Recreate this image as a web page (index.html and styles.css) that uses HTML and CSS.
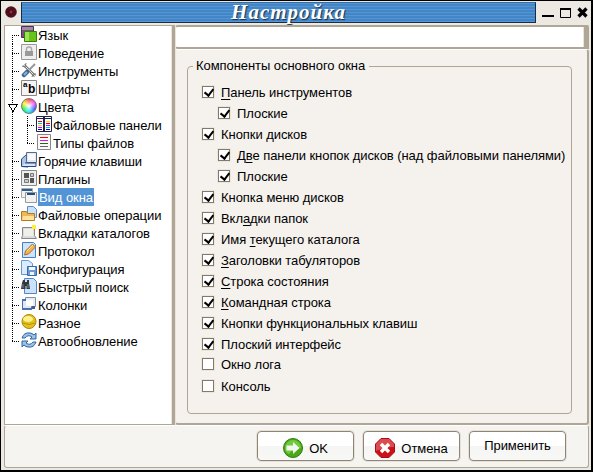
FILE: index.html
```html
<!DOCTYPE html>
<html lang="ru">
<head>
<meta charset="utf-8">
<title>Настройка</title>
<link rel="stylesheet" href="styles.css">
</head>
<body>
<div class="window">
<header class="titlebar">
<svg class="app" viewBox="0 0 12 12"><circle cx="6" cy="6" r="5.8" fill="#5a1020"/><path d="M2 3l8 6M3 10l6-8M1 6h10M6 1v10" stroke="#31101c"/><circle cx="6" cy="6" r="1.4" fill="#a52a32"/></svg>
<h1 class="caption">Настройка</h1>
<svg class="controls" viewBox="0 0 50 16"><path d="M3 12h12M21 5h11" stroke="#000" stroke-width="2"/><path d="M21.500 4.500v9h10v-9z" fill="none" stroke="#000"/><path d="M39.500 4.500l8 8M47.500 4.500l-8 8" stroke="#000" stroke-width="3.200"/></svg>
</header>
<div class="main">
<nav class="tree">
<div class="row first"><svg viewBox="0 0 16 16"><path d="M.5.5h12v11H.5z" fill="#79517f" stroke="#4a2c54"/><path d="M1 1h11v3H1z" fill="#a887ad"/><path d="M3.500 5.500h12v10h-12z" fill="#66c51a" stroke="#378000"/><path d="M4 6h4v9H4z" fill="#9be255"/></svg><span>Язык</span></div>
<div class="row"><svg viewBox="0 0 16 16"><path d="M.5.500h15v15H.5z" fill="#eee" stroke="#999"/><path d="M5.500 7V5q0-2 2.500-2t2.500 2v2" fill="none" stroke="#aaa" stroke-width="1.500"/><path d="M4 7h8v5H4z" fill="#999"/></svg><span>Поведение</span></div>
<div class="row"><svg viewBox="0 0 16 16"><path d="M3 3l11 11" stroke="#777" stroke-width="2.600"/><path d="M3 3l11 11" stroke="#e5e5e5"/><path d="M14 2L8 8" stroke="#999" stroke-width="2"/><path d="M6 10l-3 3" stroke="#3d6793" stroke-width="4.500" stroke-linecap="round"/><path d="M6 10l-3 3" stroke="#8eb1d4" stroke-width="2"/><path d="M1 4l3 1 1-4M11 15l1-3 3 0" fill="none" stroke="#777"/></svg><span>Инструменты</span></div>
<div class="row"><svg viewBox="0 0 16 16"><path d="M.5.5h15v15H.5z" fill="#f4f4f4" stroke="#888"/><text x="2" y="7" font-size="8" class="glyph">a</text><text x="7" y="13" font-size="12" class="glyph">b</text></svg><span>Шрифты</span></div>
<div class="row open"><i class="wheel"></i><span>Цвета</span></div>
<div class="row sub"><svg viewBox="0 0 16 16"><path d="M.5.500h15v15H.5z" fill="#fff" stroke="#202050"/><path d="M0 2.500h16" stroke="#202050"/><path d="M8 1v15" stroke="#202050" stroke-width="2"/><path d="M2 5.500h4M10 7.500h4" stroke="red"/><path d="M2 7.500h4M10 11.500h4" stroke="#0bd"/><path d="M2 9.500h4M10 5.500h4" stroke="#ed0"/><path d="M2 11.500h4M10 9.500h4" stroke="#d0d"/><path d="M2 13.500h4M10 13.500h4" stroke="#00c"/></svg><span>Файловые панели</span></div>
<div class="row sub last"><svg viewBox="0 0 16 16"><path d="M1.500.5h13v15h-13z" fill="#f8f8f8" stroke="#888"/><path d="M4 3.500h8" stroke="red"/><path d="M4 6.500h8" stroke="#f0f"/><path d="M4 9.500h8" stroke="green"/><path d="M4 12.500h8" stroke="#666"/></svg><span>Типы файлов</span></div>
<div class="row"><svg viewBox="0 0 16 16"><path d="M.5 14.500V7L5 3h2v12z" fill="#acc7e5" stroke="#244b80"/><path d="M5.500.5h10v10h-10z" fill="#e6e8eb" stroke="#516d94"/><path d="M7 2h7v6H7z" fill="#fafafa"/><path d="M1 14.500h14V11H4" fill="#d7e3f2" stroke="#244b80"/></svg><span>Горячие клавиши</span></div>
<div class="row"><svg viewBox="0 0 16 16"><path d="M.5.5h15v15H.5z" fill="#eee" stroke="#888"/><path d="M3 3h5v5H3zM9 8h4v5H9z" fill="#555"/><path d="M9.500 3.500h3v3h-3zM3.500 9.500h4v3h-4z" fill="#ccc" stroke="#777"/></svg><span>Плагины</span></div>
<div class="row selected"><svg viewBox="0 0 16 16"><path d="M.5.5h11v9H.5z" fill="#f2f2f2" stroke="#aaa"/><path d="M1 2h10" stroke="#2b5c9b" stroke-width="2"/><path d="M4.500 4.500h11v10h-11z" fill="#f2f2f2" stroke="#999"/><path d="M6 6h8" stroke="#244d85" stroke-width="2"/></svg><span>Вид окна</span></div>
<div class="row"><svg viewBox="0 0 16 16"><path d="M6.500.5h6l3 3v8h-9z" fill="#c7e2fc" stroke="#568dca"/><path d="M.5 14.500v-9h5l1 2h7v7z" fill="#efb655" stroke="#b67a21"/><path d="M1 14l1-4h11v4z" fill="#ffe39b"/></svg><span>Файловые операции</span></div>
<div class="row"><svg viewBox="0 0 16 16"><path d="M1.500 3.500h12v8l2 3H.5l1-3z" fill="#ddd" stroke="#888"/><path d="M3 5h9v7H3z" fill="#f0f0ea"/><path d="M11 1h4v4h-4z" fill="#fff12e"/></svg><span>Вкладки каталогов</span></div>
<div class="row"><svg viewBox="0 0 16 16"><path d="M1.500.5h11l2 2v13h-13z" fill="#cfe4f9" stroke="#3f82c7"/><path d="M3.500 13l1-4 7-7 3 3-7 7z" fill="#f4b454" stroke="#ad6e29"/><path d="M6 9l6-6" stroke="#ffe19b"/></svg><span>Протокол</span></div>
<div class="row"><svg viewBox="0 0 16 16"><path d="M.5.5h7l4 3v11H.5z" fill="#d9ebfc" stroke="#6797cf"/><path d="M6.500 6.500h9v9h-9z" fill="#6e9bd2" stroke="#356db1"/><path d="M8 7h6v3H8zM9 12h4v3H9z" fill="#f2f6fb"/></svg><span>Конфигурация</span></div>
<div class="row"><svg viewBox="0 0 16 16"><path d="M3.500.5h9l3 3v12h-12z" fill="#cae2fb" stroke="#4e88c8"/><path d="M2 2h2v2h2V2h2v3l1 6H5.500V8H4.500v3H0l1-6z" fill="#33383c"/><path d="M2 6v4M7 6v4" stroke="#7d8790"/></svg><span>Быстрый поиск</span></div>
<div class="row"><svg viewBox="0 0 16 16"><path d="M4.500 1.500h10v9h-10z" fill="#e9edf3" stroke="#8190aa"/><path d="M1 3h4v8h6v3H1z" fill="#4a70b0"/><path d="M2 5h8v7H2z" fill="#e1e8f3"/><path d="M5 4h7v6H5z" fill="#fff"/><path d="M11 10h3v3h-3z" fill="#405d94"/></svg><span>Колонки</span></div>
<div class="row"><svg viewBox="0 0 16 16"><circle cx="8" cy="7.500" r="7" fill="#e3c21e" stroke="#a78608"/><ellipse cx="7" cy="5" rx="5" ry="3" fill="#fff18a"/><path d="M2 9q6 3 12 0" fill="none" stroke="#b39208"/></svg><span>Разное</span></div>
<div class="row last"><svg viewBox="0 0 16 16"><path d="M1 6q2-6 8-5 2 0 4 2l2-2v6H9l2-2Q7 2 4 6zM15 10q-2 6-8 5-2 0-4-2l-2 2V9h6l-2 2q4 3 7-1z" fill="#9bc1e7" stroke="#2e669f"/></svg><span>Автообновление</span></div>
</nav>
<section class="side">
<div class="heading"></div>
<div class="panel">
<fieldset class="group">
<legend>Компоненты основного окна</legend>
<label class="option"><i class="box on"></i><span><u>П</u>анель инструментов</span></label>
<label class="option child"><i class="box on"></i><span>Плоские</span></label>
<label class="option"><i class="box on"></i><span>Кнопки дисков</span></label>
<label class="option child"><i class="box on"></i><span>Д<u>в</u>е панели кнопок дисков (над файловыми панелями)</span></label>
<label class="option child"><i class="box on"></i><span>Плоские</span></label>
<label class="option"><i class="box on"></i><span>Кнопка меню дисков</span></label>
<label class="option"><i class="box on"></i><span>Вкл<u>а</u>дки папок</span></label>
<label class="option"><i class="box on"></i><span>Имя <u>т</u>екущего каталога</span></label>
<label class="option"><i class="box on"></i><span><u>З</u>аголовки табуляторов</span></label>
<label class="option"><i class="box on"></i><span><u>С</u>трока состояния</span></label>
<label class="option"><i class="box on"></i><span><u>К</u>омандная строка</span></label>
<label class="option"><i class="box on"></i><span>Кнопки функциональных клавиш</span></label>
<label class="option"><i class="box on"></i><span>Плоский интерфейс</span></label>
<label class="option log"><i class="box"></i><span>Окно лога</span></label>
<label class="option"><i class="box"></i><span>Консоль</span></label>
</fieldset>
</div>
</section>
</div>
<footer class="footer">
<button class="button ok"><svg viewBox="0 0 20 20"><circle cx="10" cy="10" r="9.500" fill="#4aa91b" stroke="#2e7d0b"/><path d="M2 10a8 8 0 0 1 16 0q-8 0-12 6Q2 14 2 10z" fill="#72c93f"/><path d="M3.500 7.500H10V4l6.500 6L10 16v-3.500H3.500z" fill="#f2f7ec"/></svg><span>OK</span></button>
<button class="button cancel"><svg viewBox="0 0 20 20"><path d="M6 .5h8L19.500 6v8L14 19.500H6L.5 14V6z" fill="#cc1118" stroke="#a01218"/><path d="M6 1h8l5 5v3Q9 9 1 13V6z" fill="#db4c50"/><path d="M6 6l8 8M14 6l-8 8" stroke="#fff" stroke-width="3.500"/></svg><span>Отмена</span></button>
<button class="button apply"><span>Применить</span></button>
</footer>
</div>
</body>
</html>
```
FILE: styles.css
```css
* { box-sizing: border-box; }
body { margin: 0; font: 13px/18px "Liberation Sans", sans-serif; letter-spacing: -.06px; color: #000; }
.window { width: 593px; height: 472px; border: 1px solid #000; border-right-width: 2px; border-bottom-width: 2px; background: #ece9e2; padding: 1px 2px 2px 3px; display: flex; flex-direction: column; }
.titlebar { height: 23px; display: flex; flex: none; }
.app { width: 12px; height: 12px; margin: 4px 4px 0 1px; flex: none; }
.caption { width: 515px; height: 21px; margin: 0; border: 1px solid #1b2c47; border-top-color: #386ba2; background: repeating-linear-gradient(#5296d7 0 1px, #4485c6 1px 3px); color: #fff; font: bold italic 21px/19px "Liberation Serif", serif; letter-spacing: 1px; text-align: center; padding-left: 20px; text-shadow: 1px 1px 1px #182c48; }
.controls { width: 50px; height: 16px; margin: 2px 0 0 3px; }
.main { display: flex; height: 400px; flex: none; }
.tree { width: 171px; flex: none; background: #fff; border: 1px solid #b0a695; border-right: 3px solid #b0a695; padding: 0; box-shadow: inset -1px 0 #e9e5dd; }
.row { height: 18px; display: flex; padding-left: 16px; position: relative; }
.row svg, .wheel { width: 16px; height: 16px; flex: none; }
.row span { margin-left: 1px; line-height: 18px; height: 18px; white-space: nowrap; padding-top: 1px; }
.row::before { content: ""; position: absolute; left: 7px; top: 0; width: 1px; height: 18px; background: repeating-linear-gradient(#000 0 1px, transparent 1px 2px); }
.row.first::before { top: 9px; height: 9px; }
.row:last-child::before { height: 10px; }
.row::after { content: ""; position: absolute; left: 7px; top: 9px; width: 7px; height: 1px; background: repeating-linear-gradient(90deg, #000 0 1px, transparent 1px 2px); }
.row.sub { padding-left: 31px; background: repeating-linear-gradient(#000 0 1px, transparent 1px 2px) 22px 0 / 1px 18px no-repeat; }
.row.sub.last { background-size: 1px 10px; }
.row.sub::after { left: 22px; }
.row.open::after { left: 3px; top: 6px; width: 10px; height: 8px; background: linear-gradient(#000, #000) 0 0 / 10px 1px no-repeat, linear-gradient(60deg, transparent 47%, #000 48% 58%, transparent 59%) 0 0 / 5px 8px no-repeat, linear-gradient(-60deg, transparent 47%, #000 48% 58%, transparent 59%) 5px 0 / 5px 8px no-repeat, #fff; }
.wheel { border-radius: 50%; background: radial-gradient(#fff, transparent 70%), conic-gradient(#f44, #f4f, #35f, #0ef, #2e4, #fe2, #f44); border: 1px solid #777; }
.glyph { font-family: "Liberation Sans", sans-serif; font-weight: bold; letter-spacing: 0; }
.row.selected span { background: #5294d6; color: #fff; padding-left: 1px; padding-right: 1px; }
.side { flex: 1; background: #ece9e2; }
.heading { height: 24px; background: #fff; border: 2px solid #b0a695; border-left: 1px solid #e9e5dd; border-right: 5px solid #b0a695; box-shadow: inset -1px 0 #e9e5dd; border-radius: 3px 2px 0 3px; }
.panel { height: 376px; background: #f5f2ee; border: 2px solid #b0a695; border-left: 1px solid #e9e5dd; border-top: 1px solid #fff; border-radius: 3px; padding: 9px 15px 0 11px; }
.group { margin: 0; width: 385px; height: 355px; border: 1px solid #b0a695; border-radius: 4px; padding: 8px 0 0 14px; min-width: 0; }
.group legend { padding: 0 4px 0 3px; margin-left: -9px; height: 14px; line-height: 14px; }
.option { height: 21px; display: flex; align-items: center; white-space: nowrap; }
.option span { position: relative; top: 1px; }
.child { padding-left: 16px; }
.log { height: 19px; margin-bottom: 2px; }
.box { width: 12px; height: 12px; border: 1px solid #82796a; background: #fff; margin-right: 7px; position: relative; flex: none; box-shadow: 0 0 0 1px #ebe7df; }
.on::after { content: ""; position: absolute; left: 3px; top: 0; width: 4px; height: 7px; border: solid #000; border-width: 0 2px 2px 0; transform: rotate(38deg); }
u { text-decoration: underline; text-underline-offset: 2px; text-decoration-skip-ink: none; }
.footer { height: 43px; background: #f5f4f0; border: 1px solid #b0a695; border-top: 1px solid #fff; border-radius: 3px; display: flex; justify-content: flex-end; gap: 9px; padding: 5px 22px 0 0; }
.button { width: 97px; height: 30px; border: 1px solid #8f8575; border-radius: 4px; background: linear-gradient(#fff 50%, #f5f5f3 51%, #f8f8f6); font: inherit; letter-spacing: inherit; color: #000; display: flex; align-items: center; justify-content: center; padding: 0; box-shadow: 0 0 0 1px #e5e1d9; }
.button svg { width: 20px; height: 20px; margin-right: 6px; position: relative; top: 2px; }
.button svg + span { padding-top: 5px; }
```
